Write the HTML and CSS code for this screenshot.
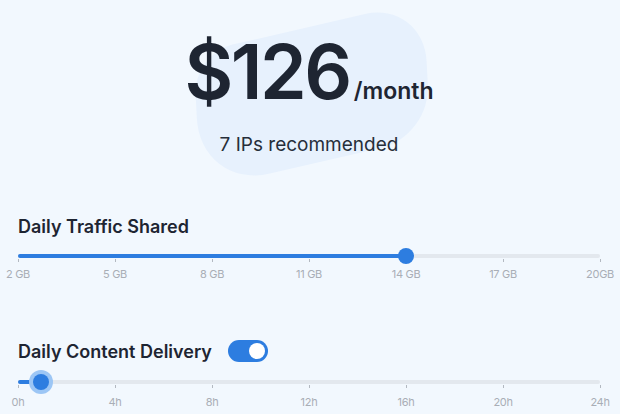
FILE: index.html
```html
<!DOCTYPE html>
<html lang="en">
<head>
    <meta charset="UTF-8">
    <meta name="viewport" content="width=device-width, initial-scale=1.0">
    <title>Pricing</title>
    <link rel="stylesheet" href="styles.css">
</head>
<body>
    <div class="price-box">
        <div class="blob"></div>
        <div class="price">
            <span class="amount">$126</span><span class="period">/month</span>
        </div>
        <div class="ips">7 IPs recommended</div>
    </div>

    <div class="option traffic">
        <div class="option-title">Daily Traffic Shared</div>
        <div class="slider">
            <div class="track"></div>
            <div class="fill" style="width: 66.67%;"></div>
            <div class="thumb" style="left: 66.67%;"></div>
        </div>
        <div class="ticks">
            <div class="tick"><i></i><span>2 GB</span></div>
            <div class="tick"><i></i><span>5 GB</span></div>
            <div class="tick"><i></i><span>8 GB</span></div>
            <div class="tick"><i></i><span>11 GB</span></div>
            <div class="tick"><i></i><span>14 GB</span></div>
            <div class="tick"><i></i><span>17 GB</span></div>
            <div class="tick"><i></i><span>20GB</span></div>
        </div>
    </div>

    <div class="option delivery">
        <div class="option-title">
            Daily Content Delivery
            <span class="toggle"><span class="knob"></span></span>
        </div>
        <div class="slider">
            <div class="track"></div>
            <div class="fill" style="width: 4%;"></div>
            <div class="thumb active" style="left: 4%;"></div>
        </div>
        <div class="ticks">
            <div class="tick"><i></i><span>0h</span></div>
            <div class="tick"><i></i><span>4h</span></div>
            <div class="tick"><i></i><span>8h</span></div>
            <div class="tick"><i></i><span>12h</span></div>
            <div class="tick"><i></i><span>16h</span></div>
            <div class="tick"><i></i><span>20h</span></div>
            <div class="tick"><i></i><span>24h</span></div>
        </div>
    </div>
</body>
</html>
```
FILE: styles.css
```css
/* page */
body {
    margin: 0;
    padding: 0 20px 0 18px;
    font-family: Inter, "Noto Sans", sans-serif;
    background-color: #f2f8fe;
    color: #1e2532;
    overflow: hidden;
}

/* price header */
.price-box {
    position: relative;
    display: flex;
    flex-direction: column;
    align-items: center;
    padding-top: 26px;
}

.blob {
    position: absolute;
    left: 176px;
    top: 28px;
    width: 236px;
    height: 134px;
    background-color: #e7f1fd;
    border-radius: 40px 60px 50px 70px;
    transform: rotate(-13deg) skewX(-10deg);
}

.price {
    position: relative;
    display: flex;
    align-items: baseline;
    margin-left: 0;
}

.amount {
    font-size: 75px;
    font-weight: 600;
    letter-spacing: -2.5px;
    line-height: 92px;
}

.period {
    font-size: 23px;
    font-weight: 600;
    margin-left: 4px;
}

.ips {
    position: relative;
    font-size: 19px;
    margin-top: 15px;
    color: #262e3a;
}

/* slider sections */
.option {
    margin-top: 58px;
}

.option.delivery {
    margin-top: 58px;
}

.option-title {
    display: flex;
    align-items: center;
    gap: 16px;
    font-size: 18px;
    font-weight: 600;
    height: 24px;
}

.slider {
    position: relative;
    height: 16px;
    margin-top: 10px;
}

.delivery .slider {
    margin-top: 11px;
}

.track {
    position: absolute;
    left: 0;
    right: 0;
    top: 6px;
    height: 4px;
    border-radius: 2px;
    background-color: #e3e8ee;
}

.fill {
    position: absolute;
    left: 0;
    top: 6px;
    height: 4px;
    border-radius: 2px;
    background-color: #2d7de0;
}

.thumb {
    position: absolute;
    top: 0;
    width: 16px;
    height: 16px;
    margin-left: -8px;
    border-radius: 50%;
    background-color: #2d7de0;
}

.thumb.active {
    box-shadow: 0 0 0 4px #9cc6f5;
}

.ticks {
    display: flex;
    justify-content: space-between;
    margin-top: -5px;
}

.tick {
    width: 0;
    display: flex;
    flex-direction: column;
    align-items: center;
}

.tick i {
    width: 1px;
    height: 3px;
    background-color: #b3b9c1;
}

.tick span {
    white-space: nowrap;
    font-size: 11px;
    color: #a9aeb6;
    margin-top: 5px;
    letter-spacing: -0.3px;
}

.delivery .tick span {
    margin-top: 7px;
}

/* on/off switch */
.toggle {
    display: inline-flex;
    align-items: center;
    justify-content: flex-end;
    width: 40px;
    height: 22px;
    padding: 0 3px;
    box-sizing: border-box;
    border-radius: 11px;
    background-color: #2d7de0;
}

.knob {
    width: 16px;
    height: 16px;
    border-radius: 50%;
    background-color: #fff;
}
```
